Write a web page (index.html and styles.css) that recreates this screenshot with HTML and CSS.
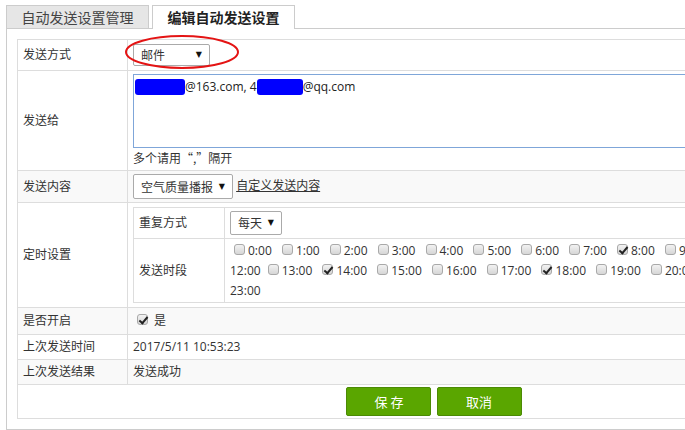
FILE: index.html
```html
<!DOCTYPE html>
<html lang="zh-CN">
<head>
  <meta charset="UTF-8">
  <meta name="viewport" content="width=device-width, initial-scale=1.0">
  <link rel="stylesheet" href="styles.css">
  <title>编辑自动发送设置</title>
</head>
<body>
  <div class="page">
    <ul class="tabs">
      <li class="tab">自动发送设置管理</li>
      <li class="tab tab-active">编辑自动发送设置</li>
    </ul>
    <div class="panel">
      <table class="form">
        <tr class="row-mode">
          <td class="label">发送方式</td>
          <td class="value">
            <span class="select select-mode">
              <select><option>邮件</option></select>
            </span>
            <svg class="mark" width="118" height="36" viewBox="0 0 118 36">
              <ellipse cx="59" cy="18" rx="56" ry="16" fill="none" stroke="#e41414" stroke-width="2"/>
            </svg>
          </td>
        </tr>
        <tr class="row-to">
          <td class="label">发送给</td>
          <td class="value">
            <div class="recipients"><span class="mask mask-a"></span>@163.com, 4<span class="mask mask-b"></span>@qq.com</div>
            <div class="hint">多个请用“,”隔开</div>
          </td>
        </tr>
        <tr class="row-content alt">
          <td class="label">发送内容</td>
          <td class="value">
            <span class="select select-content">
              <select><option>空气质量播报</option></select>
            </span>
            <a href="#" class="link">自定义发送内容</a>
          </td>
        </tr>
        <tr class="row-timer">
          <td class="label">定时设置</td>
          <td class="value">
            <table class="schedule">
              <tr class="row-repeat">
                <td class="label">重复方式</td>
                <td>
                  <span class="select select-repeat">
                    <select><option>每天</option></select>
                  </span>
                </td>
              </tr>
              <tr>
                <td class="label">发送时段</td>
                <td class="hours">
                  <label class="hour"><input type="checkbox">0:00</label>
                  <label class="hour"><input type="checkbox">1:00</label>
                  <label class="hour"><input type="checkbox">2:00</label>
                  <label class="hour"><input type="checkbox">3:00</label>
                  <label class="hour"><input type="checkbox">4:00</label>
                  <label class="hour"><input type="checkbox">5:00</label>
                  <label class="hour"><input type="checkbox">6:00</label>
                  <label class="hour"><input type="checkbox">7:00</label>
                  <label class="hour"><input type="checkbox" checked>8:00</label>
                  <label class="hour"><input type="checkbox">9:00</label>
                  <label class="hour"><input type="checkbox">10:00</label>
                  <label class="hour"><input type="checkbox">11:00</label>
                  <label class="hour hour-wrap"><input type="checkbox"><br>12:00</label>
                  <label class="hour"><input type="checkbox">13:00</label>
                  <label class="hour"><input type="checkbox" checked>14:00</label>
                  <label class="hour"><input type="checkbox">15:00</label>
                  <label class="hour"><input type="checkbox">16:00</label>
                  <label class="hour"><input type="checkbox">17:00</label>
                  <label class="hour"><input type="checkbox" checked>18:00</label>
                  <label class="hour"><input type="checkbox">19:00</label>
                  <label class="hour"><input type="checkbox">20:00</label>
                  <label class="hour"><input type="checkbox">21:00</label>
                  <label class="hour"><input type="checkbox">22:00</label>
                  <label class="hour"><input type="checkbox"><br>23:00</label>
                </td>
              </tr>
            </table>
          </td>
        </tr>
        <tr class="row-check alt">
          <td class="label">是否开启</td>
          <td class="value"><label class="check"><input type="checkbox" checked> 是</label></td>
        </tr>
        <tr class="row-info">
          <td class="label">上次发送时间</td>
          <td class="value">2017/5/11 10:53:23</td>
        </tr>
        <tr class="row-info alt">
          <td class="label">上次发送结果</td>
          <td class="value">发送成功</td>
        </tr>
        <tr class="row-actions">
          <td colspan="2" class="actions">
            <button class="btn">保 存</button>
            <button class="btn">取消</button>
          </td>
        </tr>
      </table>
    </div>
  </div>
</body>
</html>
```

FILE: styles.css
```css
html, body {
  overflow: hidden;
}

body {
  margin: 0;
  background-color: #fff;
  color: #333;
  font-family: "Open Sans", "Noto Sans CJK SC", sans-serif;
  font-size: 12px;
}

.page {
  width: 860px;
  padding: 5px 0 0 6px;
}

.tabs {
  display: flex;
  gap: 3px;
  list-style: none;
  margin: 0;
  padding: 0;
}

.tab {
  width: 141px;
  height: 22px;
  line-height: 24px;
  border: 1px solid #ccc;
  border-bottom: none;
  background-color: #e6e6e6;
  font-size: 14px;
  text-align: center;
  color: #444;
}

.tab-active {
  position: relative;
  height: 23px;
  margin-bottom: -1px;
  background-color: #fff;
  color: #222;
  font-weight: bold;
}

.panel {
  width: 834px;
  padding: 10px;
  border: 1px solid #ccc;
}

.form {
  width: 834px;
  border-collapse: collapse;
}

.form td {
  border: 1px solid #ddd;
  padding: 2px 5px;
  line-height: 20px;
  vertical-align: middle;
}

.form .label {
  width: 99px;
}

.form .alt td {
  background-color: #f9f9f9;
}

.row-mode .value {
  position: relative;
  padding-top: 4px;
  padding-bottom: 4px;
}

.mark {
  position: absolute;
  left: -5px;
  top: -6px;
}

.select {
  position: relative;
  display: inline-block;
  vertical-align: middle;
}

.select select {
  -webkit-appearance: none;
  appearance: none;
  width: 100%;
  height: 22px;
  padding: 0 16px 0 7px;
  border: 1px solid #aaa;
  border-radius: 2px;
  background-color: #fff;
  color: #333;
  font: inherit;
  font-family: "Noto Sans CJK SC", sans-serif;
  outline: none;
}

.select::after {
  content: "\25BC";
  position: absolute;
  right: 8px;
  top: 50%;
  margin-top: -6px;
  font-family: "DejaVu Sans", sans-serif;
  font-size: 8px;
  line-height: 12px;
  color: #111;
  pointer-events: none;
}

.select-mode {
  width: 77px;
}

.select-content {
  width: 100px;
}

.select-content select {
  height: 25px;
}

.select-repeat {
  width: 52px;
}

.select-repeat select {
  height: 24px;
}

.row-to .value {
  padding-top: 3px;
  padding-bottom: 2px;
}

.recipients {
  height: 66px;
  padding: 3px 1px;
  border: 1px solid #7fa6d9;
  line-height: 18px;
  color: #222;
}

.mask {
  display: inline-block;
  height: 16px;
  vertical-align: -4px;
  border-radius: 3px;
  background-color: #0000ff;
}

.mask-a {
  width: 50px;
}

.mask-b {
  width: 46px;
}

.hint {
  font-family: "Noto Sans CJK SC", sans-serif;
  line-height: 20px;
}

.row-content .value {
  padding-top: 3px;
  padding-bottom: 3px;
}

.link {
  color: #333;
  text-decoration: underline;
  font-family: "Noto Sans CJK SC", sans-serif;
}

.row-timer .value {
  padding-top: 4px;
  padding-bottom: 4px;
}

.schedule {
  width: 100%;
  border-collapse: collapse;
}

.schedule td {
  border: 1px solid #ddd;
  padding: 3px 5px;
}

.schedule .label {
  width: 80px;
}

.schedule .hours {
  padding-top: 2px;
  padding-bottom: 1px;
}

.hour {
  margin-right: 3px;
}

.hour-wrap {
  margin-right: 0;
}

input[type="checkbox"] {
  -webkit-appearance: none;
  appearance: none;
  position: relative;
  width: 11px;
  height: 11px;
  margin: 3px 3px 3px 4px;
  border: 1px solid #a9a9a9;
  border-radius: 3px;
  background: linear-gradient(#f2f2f2, #d6d6d6);
  vertical-align: -3px;
}

input[type="checkbox"]:checked::after {
  content: "";
  position: absolute;
  left: 3px;
  top: 0;
  width: 3px;
  height: 7px;
  border-right: 2px solid #222;
  border-bottom: 2px solid #222;
  transform: rotate(40deg);
}

.row-check .value {
  padding-top: 3px;
  padding-bottom: 3px;
}

.row-info .value {
  padding-top: 2px;
  padding-bottom: 2px;
}

.actions {
  text-align: center;
  padding-top: 4px;
  padding-bottom: 3px;
}

.btn {
  width: 85px;
  height: 29px;
  margin: 0 1px;
  border: 1px solid #4b8a04;
  border-radius: 2px;
  background-color: #5aa600;
  color: #fff;
  font-family: "Noto Sans CJK SC", sans-serif;
  font-size: 13px;
  cursor: pointer;
}
```
